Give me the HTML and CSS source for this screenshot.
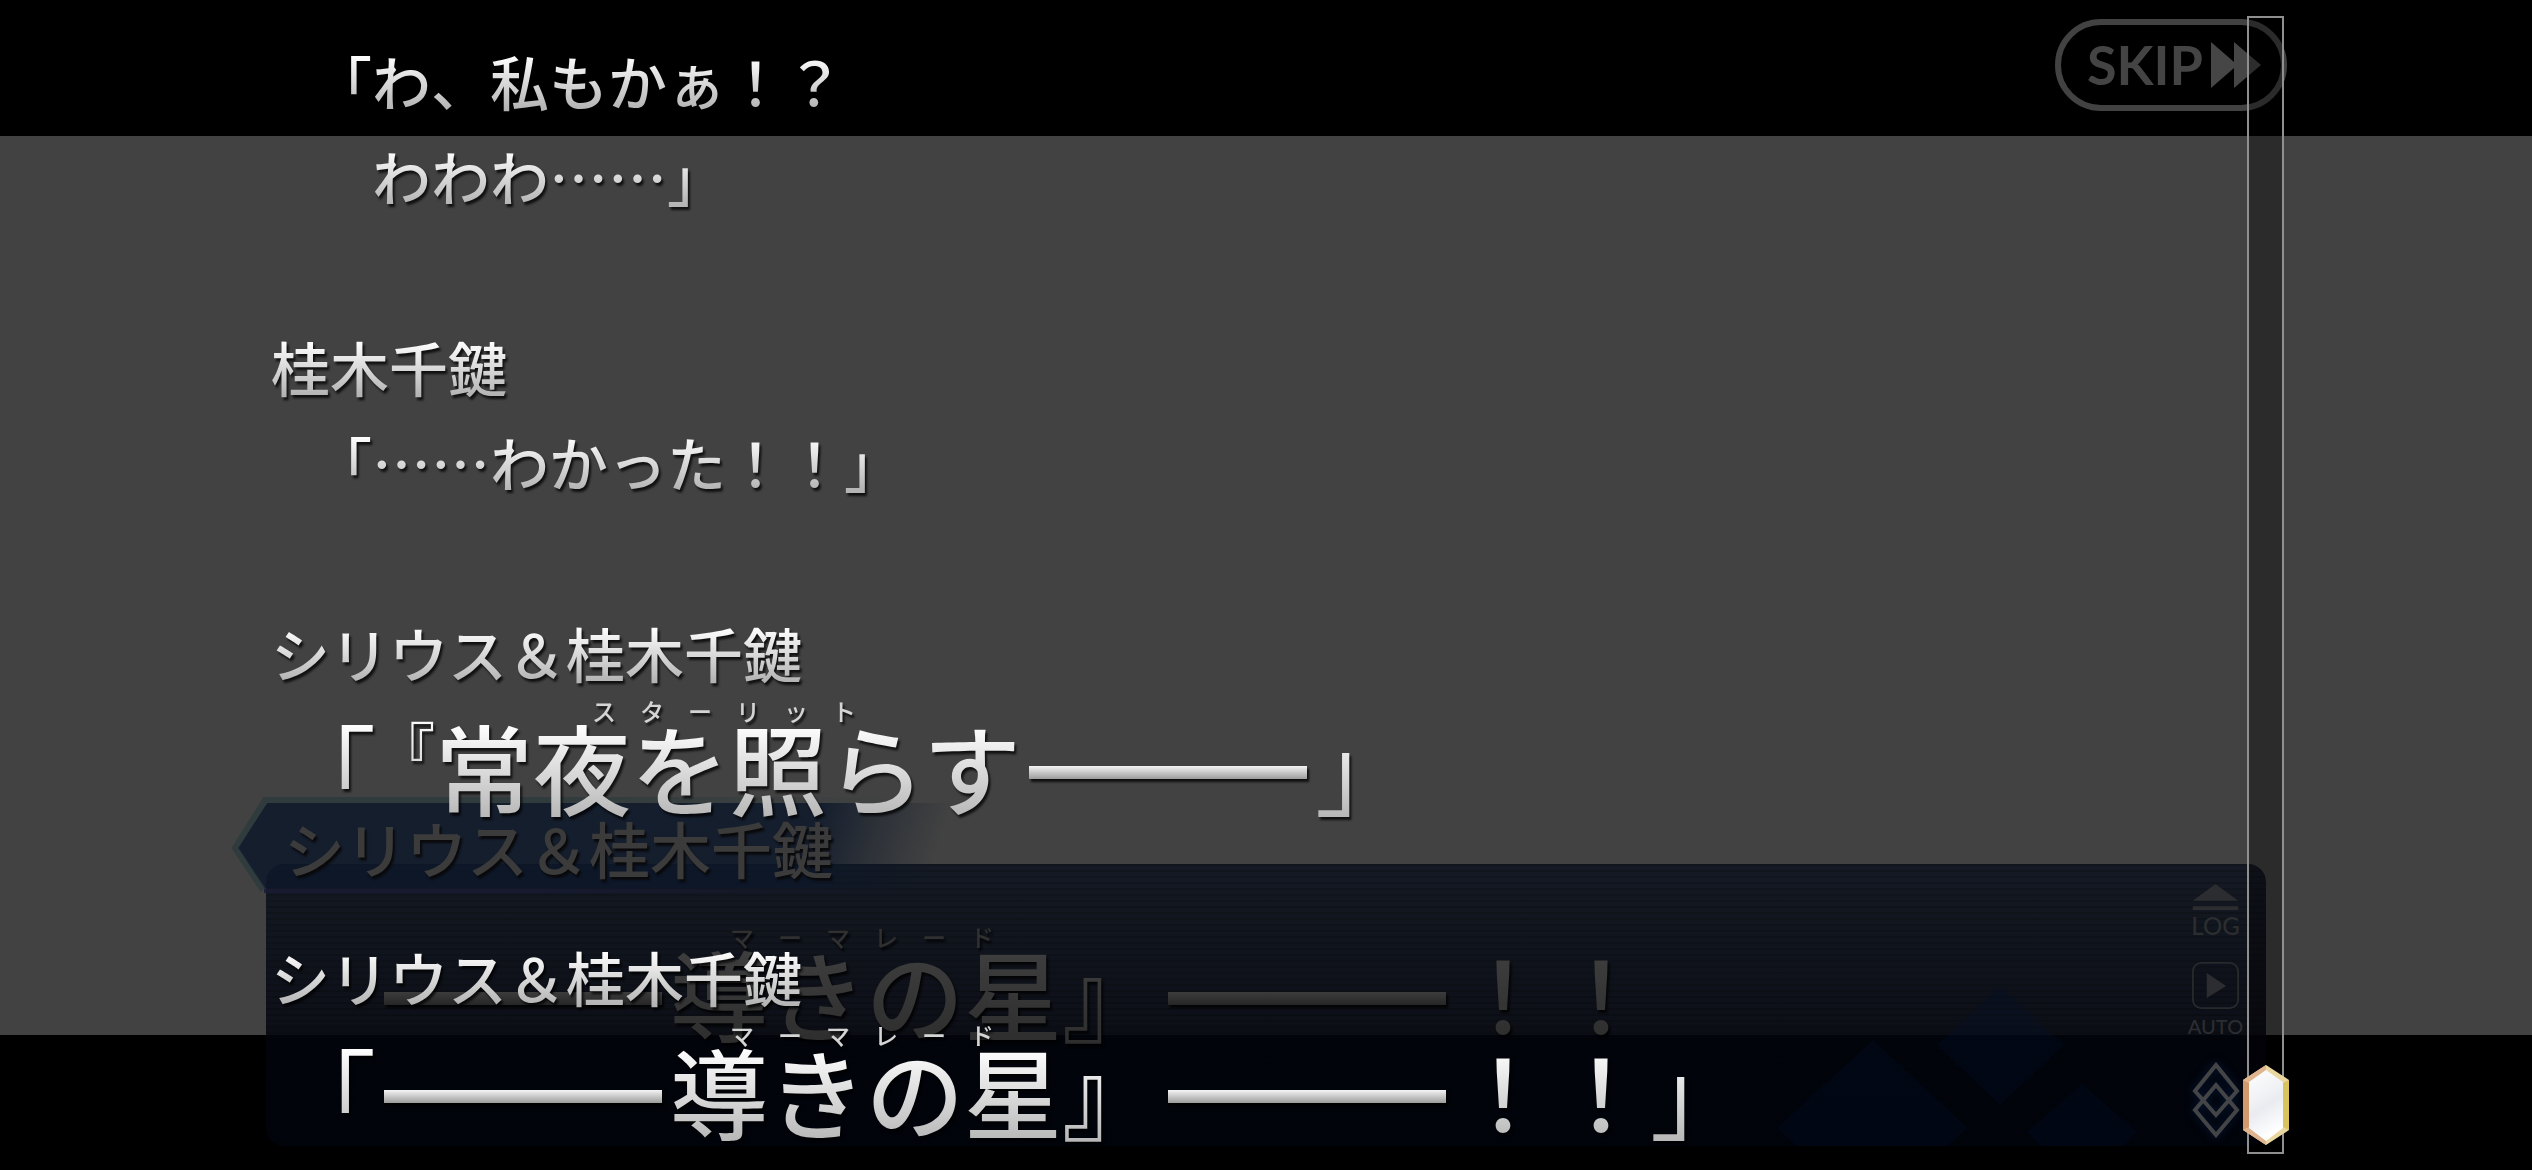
FILE: index.html
```html
<!DOCTYPE html>
<html lang="ja">
<head>
<meta charset="utf-8">
<meta name="viewport" content="width=device-width, initial-scale=1">
<title>会話ログ</title>
<link rel="stylesheet" href="styles.css">
</head>
<body>
<main class="stage">
  <div class="scene">
    <header class="scene-header">
      <button class="skip" type="button">SKIP
        <svg width="50" height="46" viewBox="0 0 50 46" aria-hidden="true"><path d="M0 0L23 20V0L50 23L23 46V26L0 46Z"/></svg>
      </button>
    </header>

    <section class="dialogue">
      <div class="nameplate">
        <svg class="nameplate-shape" viewBox="0 0 720 96" aria-hidden="true">
          <defs>
            <linearGradient id="plate" gradientUnits="userSpaceOnUse" x1="580" y1="30" x2="700" y2="70">
              <stop offset="0" stop-color="#0c1729" stop-opacity=".84"/>
              <stop offset=".5" stop-color="#0c1729" stop-opacity=".38"/>
              <stop offset="1" stop-color="#0c1729" stop-opacity="0"/>
            </linearGradient>
            <linearGradient id="edge" gradientUnits="userSpaceOnUse" x1="300" y1="0" x2="680" y2="0">
              <stop offset="0" stop-color="#28383a" stop-opacity=".7"/>
              <stop offset="1" stop-color="#28383a" stop-opacity="0"/>
            </linearGradient>
            <linearGradient id="base" gradientUnits="userSpaceOnUse" x1="300" y1="0" x2="680" y2="0">
              <stop offset="0" stop-color="#181b33" stop-opacity=".85"/>
              <stop offset="1" stop-color="#181b33" stop-opacity="0"/>
            </linearGradient>
          </defs>
          <path d="M6 51L35 6H720V91H32Z" fill="url(#plate)"/>
          <path d="M31 93L3 51L33 3H720" fill="none" stroke="url(#edge)" stroke-width="6"/>
          <path d="M32 94H720" fill="none" stroke="url(#base)" stroke-width="5"/>
        </svg>
        <span class="nameplate-text">シリウス＆桂木千鍵</span>
      </div>
      <div class="panel">
        <svg class="panel-diamonds" viewBox="0 0 362 160" aria-hidden="true">
          <path d="M223 0L287 59L223 119L160 59Z"/>
          <path d="M96 54L191 142L170 160H20L0 142Z"/>
          <path d="M305 98L360 146L346 160H264L250 146Z"/>
        </svg>
        <p class="shout shout-dim">
          <span class="bar"></span>
          <ruby>導きの星<rt>マ　ー　マ　レ　ー　ド</rt></ruby>
          <span>』</span>
          <span class="bar"></span>
          <span>！！</span>
        </p>
        <div class="controls">
          <button class="control log-button" type="button">
            <svg width="49" height="28" viewBox="0 0 49 28" aria-hidden="true"><path d="M24.500 0L49 18H0ZM0 24H49V28H0Z"/></svg>
            LOG
          </button>
          <button class="control auto-button" type="button">
            <svg width="51" height="51" viewBox="0 0 51 51" aria-hidden="true"><rect x="1" y="1" width="49" height="49" rx="9" fill="none" stroke="#27292c" stroke-width="2"/><path d="M16 12L37 26L16 39Z"/></svg>
            AUTO
          </button>
          <button class="control next-button" type="button" aria-label="次へ">
            <svg width="48" height="76" viewBox="0 0 48 76" aria-hidden="true"><path d="M24 3L45 29L24 53L3 29ZM24 23L45 48L24 73L3 48Z"/></svg>
          </button>
        </div>
      </div>
    </section>
  </div>

  <section class="log" aria-label="会話ログ">
    <article class="entry">
      <p class="speech">「わ、私もかぁ！？</p>
      <p class="speech">　わわわ……」</p>
    </article>
    <article class="entry">
      <h2 class="speaker">桂木千鍵</h2>
      <p class="speech">「……わかった！！」</p>
    </article>
    <article class="entry">
      <h2 class="speaker">シリウス＆桂木千鍵</h2>
      <p class="shout">
        <span class="quote">「</span>
        <span class="small-quote">『</span>
        <ruby>常夜を照らす<rt>ス　タ　ー　リ　ッ　ト</rt></ruby>
        <span class="bar"></span>
        <span class="quote">」</span>
      </p>
    </article>
    <article class="entry">
      <h2 class="speaker">シリウス＆桂木千鍵</h2>
      <p class="shout">
        <span class="quote">「</span>
        <span class="bar"></span>
        <ruby>導きの星<rt>マ　ー　マ　レ　ー　ド</rt></ruby>
        <span>』</span>
        <span class="bar"></span>
        <span>！！</span>
        <span class="quote">」</span>
      </p>
    </article>
  </section>

  <div class="scrollbar" role="scrollbar" aria-label="ログのスクロール" aria-orientation="vertical" aria-valuenow="100">
    <svg class="thumb" viewBox="0 0 46 80" aria-hidden="true">
      <defs>
        <linearGradient id="pearl" x1="0" y1="0" x2="0.3" y2="1">
          <stop offset="0" stop-color="#fff"/>
          <stop offset=".45" stop-color="#f0f1f4"/>
          <stop offset=".6" stop-color="#e9ebf0"/>
          <stop offset="1" stop-color="#fff"/>
        </linearGradient>
      </defs>
      <path d="M23 0L46 15V65L23 80L0 65V15Z" fill="#ead6a0"/>
      <path d="M0 15L7 18V62L0 65Z" fill="#d29a6c"/>
      <path d="M46 15L40 18V62L46 65Z" fill="#d8c35c"/>
      <path d="M0 15L23 0V5L6 18ZM0 65L23 80V75L6 62Z" fill="#dfb48e"/>
      <path d="M23 5L40 17V63L23 76L6 63V17Z" fill="url(#pearl)"/>
    </svg>
  </div>
</main>
</body>
</html>
```
FILE: styles.css
```css
* {
  box-sizing: border-box;
}

body {
  margin: 0;
  background: #000;
  font-family: "Noto Sans CJK JP", sans-serif;
  font-weight: 500;
}

h2,
p {
  margin: 0;
  font-weight: inherit;
}

button {
  margin: 0;
  padding: 0;
  border: 0;
  background: none;
  font-family: Lato, sans-serif;
  cursor: pointer;
}

.stage {
  display: grid;
  grid-template-columns: minmax(0, 1fr);
  height: 100vh;
  overflow: hidden;
}

.scene,
.log,
.scrollbar {
  grid-area: 1 / 1;
}

/* Dimmed game screen behind the log */
.scene {
  isolation: isolate;
  display: flex;
  flex-direction: column;
  justify-content: space-between;
  background: linear-gradient(#000 136px, #424242 136px calc(100% - 135px), #000 calc(100% - 135px));
}

.scene-header {
  display: flex;
  justify-content: flex-end;
  padding: 19px 245px 0;
}

.skip {
  display: flex;
  align-items: center;
  gap: 8px;
  height: 92px;
  padding: 0 20px 0 26px;
  border: 6px solid #424242;
  border-radius: 46px;
  color: #444;
  font-size: 54px;
  font-weight: 700;
  line-height: 80px;
}

.skip svg {
  fill: #464646;
}

.dialogue {
  margin: 0 266px 24px;
}

.nameplate {
  position: relative;
  z-index: 1;
  width: 720px;
  height: 96px;
  margin: 0 0 -29px -34px;
  padding-left: 52px;
}

.nameplate-shape {
  position: absolute;
  inset: 0;
}

.nameplate-text {
  position: relative;
  color: #3b3b3b;
  font-size: 61px;
  line-height: 102px;
  text-shadow: 2px 3px 2px #0a0a0c;
}

.panel {
  position: relative;
  display: flex;
  justify-content: space-between;
  height: 282px;
  padding: 20px 25px 0 110px;
  border-radius: 18px;
  background:
    repeating-linear-gradient(rgba(0, 0, 0, 0.14) 0 2px, transparent 2px 6px),
    linear-gradient(rgba(9, 16, 28, 0.8), rgba(2, 5, 14, 0.84) 60%, rgba(1, 4, 13, 0.84));
}

.panel-diamonds {
  position: absolute;
  right: 127px;
  bottom: 0;
  width: 362px;
  fill: rgba(0, 20, 52, 0.22);
}

.controls {
  position: relative;
  display: flex;
  flex-direction: column;
  align-items: center;
  gap: 22px;
  width: 51px;
}

.control {
  display: flex;
  flex-direction: column;
  align-items: center;
  color: #2b2d30;
  font-size: 24px;
  font-weight: 500;
  line-height: 28px;
}

.control svg {
  fill: #2b2d30;
}

.log-button {
  gap: 2px;
  height: 56px;
}

.auto-button {
  gap: 3px;
  height: 78px;
  font-size: 20px;
}

.next-button svg {
  fill: none;
  stroke: #434446;
  stroke-width: 4;
  filter: drop-shadow(0 0 4px #081838);
}

/* Log text */
.log {
  position: relative;
  display: flex;
  flex-direction: column;
  gap: 96px;
  padding: 33px 271px 0;
}

.speaker,
.speech {
  width: max-content;
  font-size: 59px;
  line-height: 95px;
  color: transparent;
  background: linear-gradient(#fff 22px, #b4b4b4 76px);
  background-clip: text;
  filter: drop-shadow(2px 3px 1px rgba(0, 0, 0, 0.75));
}

.speech {
  margin-left: 42px;
}

.shout {
  display: flex;
  height: 133px;
  margin-left: 7px;
  font-size: 98px;
  line-height: 131px;
  white-space: nowrap;
  filter: drop-shadow(2px 3px 1px rgba(0, 0, 0, 0.75));
}

.shout > span,
.shout > ruby {
  display: block;
  color: transparent;
  background: linear-gradient(#fff 24px, #b8b8b8 116px);
  background-clip: text;
}

.shout > .quote {
  font-weight: 400;
}

.shout > ruby {
  position: relative;
}

.shout rt {
  position: absolute;
  inset: -7px 8px auto 0;
  color: #d4d4d4;
  font-size: 24px;
  line-height: 36px;
  text-align: center;
}

.shout > .small-quote {
  height: 59px;
  margin-top: 17px;
  font-size: 59px;
  line-height: 59px;
  background-image: linear-gradient(#fff, #cfcfcf);
}

.shout > .bar {
  width: 278px;
  height: 13px;
  margin: 66px 8px 0;
  background: linear-gradient(#f4f4f4, #9c9c9c);
}

.shout-dim {
  position: relative;
  margin: 42px 0 0;
}

.shout-dim > span,
.shout-dim > ruby {
  background-image: linear-gradient(#3e3e3e 24px, #2e2e2e 116px);
}

.shout-dim > .bar {
  background: linear-gradient(#3c3c3c, #262626);
}

.shout-dim rt {
  color: #303030;
}

/* Scrollbar */
.scrollbar {
  position: relative;
  display: flex;
  justify-self: end;
  align-items: flex-end;
  justify-content: center;
  width: 37px;
  margin: 16px 248px 16px 0;
  padding-bottom: 7px;
  border: 2px solid #8f8f8f;
  background: rgba(4, 0, 3, 0.35);
}

.thumb {
  flex: none;
  width: 46px;
  height: 80px;
}
```
